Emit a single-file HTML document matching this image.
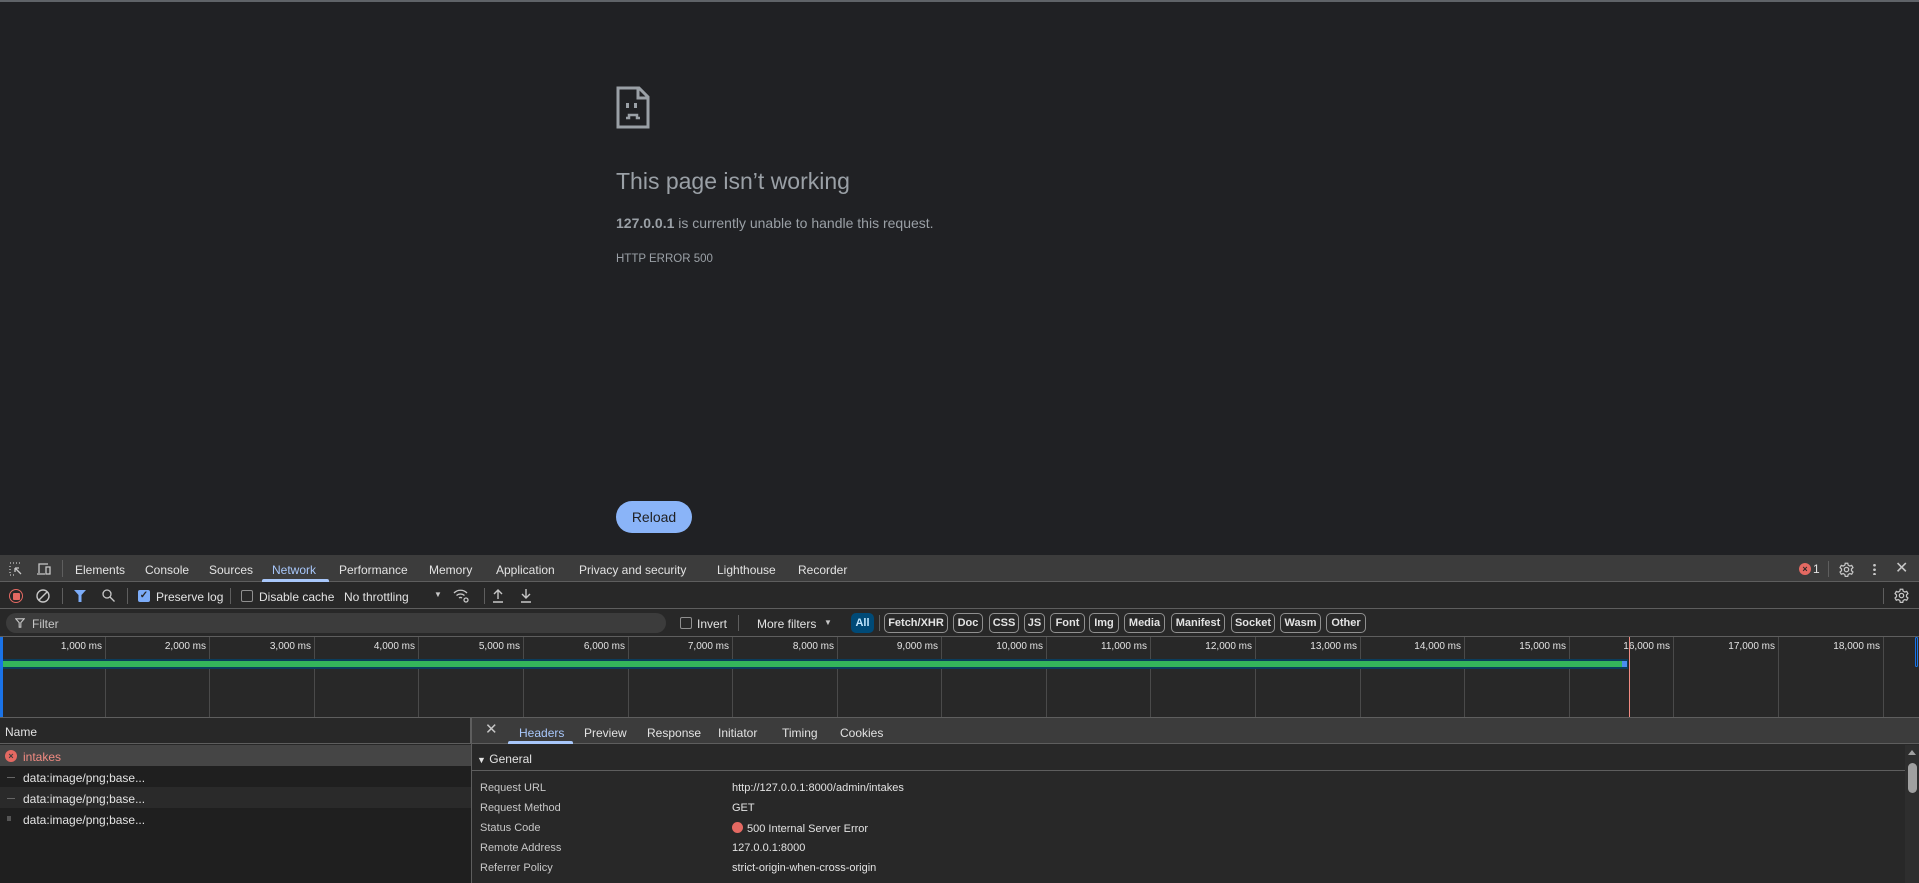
<!DOCTYPE html>
<html><head><meta charset="utf-8"><style>
*{margin:0;padding:0;box-sizing:border-box}
body{width:1919px;height:883px;overflow:hidden;background:#202124;font-family:"Liberation Sans",sans-serif;position:relative}
.a{position:absolute;white-space:nowrap}
.dt{font-size:12px;color:#e3e3e3}
.pill{position:absolute;top:613px;height:20px;border:1px solid #8f8f8f;border-radius:5px;color:#e3e3e3;font-size:11px;font-weight:bold;line-height:18px;text-align:center}
.gl{position:absolute;top:637px;width:1px;height:80px;background:#4a4a4a}
.tl{position:absolute;top:641px;font-size:10px;color:#e3e3e3;text-align:right;width:90px}
.lbl{position:absolute;left:480px;font-size:11px;color:#c7c7c7}
.val{position:absolute;left:732px;font-size:11px;color:#e3e3e3}
</style></head><body>
<div class="a" style="left:0;top:0;width:1919px;height:2px;background:#5f6368"></div>
<svg class="a" style="left:616px;top:86px" width="34" height="43" viewBox="0 0 34 43"><path d="M2 2H23L32 11V41H2Z" fill="none" stroke="#9aa0a6" stroke-width="3"/><path d="M22 2V12H32" fill="none" stroke="#9aa0a6" stroke-width="3"/><rect x="10" y="17" width="3" height="5" fill="#9aa0a6"/><rect x="18" y="17" width="3" height="5" fill="#9aa0a6"/><path d="M10 32H13V29H21V32H24" fill="none" stroke="#9aa0a6" stroke-width="2.5"/></svg>
<div class="a" style="left:616px;top:168px;font-size:23px;color:#9aa0a6">This page isn’t working</div>
<div class="a" style="left:616px;top:215px;font-size:14px;color:#9aa0a6"><b>127.0.0.1</b> is currently unable to handle this request.</div>
<div class="a" style="left:616px;top:253px;font-size:11.5px;color:#8ab4f8;color:#9aa0a6">HTTP ERROR 500</div>
<div class="a" style="left:616px;top:501px;width:76px;height:32px;border-radius:16px;background:#8ab4f8;color:#202124;font-size:14px;line-height:32px;text-align:center">Reload</div>

<!-- devtools -->
<div class="a" style="left:0;top:555px;width:1919px;height:328px;background:#282828"></div>
<div class="a" style="left:0;top:555px;width:1919px;height:27px;background:#3c3c3c;border-bottom:1px solid #5e5e5e"></div>
<svg class="a" style="left:9px;top:562px" width="14" height="14" viewBox="0 0 14 14" fill="none" stroke="#c7c7c7" stroke-width="1.3"><path d="M1 1h1M4 1h1M7 1h1M10 1h1M1 4v1M1 7v1M1 10v1M1 13h1M4 13h1" /><path d="M6 6L12 12M6 6v4M6 6h4"/></svg>
<svg class="a" style="left:36px;top:562px" width="16" height="14" viewBox="0 0 16 14" fill="none" stroke="#c7c7c7" stroke-width="1.3"><path d="M3 11V2h9M1 12h8"/><rect x="10" y="5" width="4" height="7"/></svg>
<div class="a" style="left:62px;top:560px;width:1px;height:17px;background:#5e5e5e"></div>
<div class="a dt" style="left:75px;top:563px">Elements</div>
<div class="a dt" style="left:145px;top:563px">Console</div>
<div class="a dt" style="left:209px;top:563px">Sources</div>
<div class="a dt" style="left:272px;top:563px;color:#a8c7fa">Network</div>
<div class="a" style="left:262px;top:579px;width:67px;height:3px;background:#a8c7fa;border-radius:2px 2px 0 0"></div>
<div class="a dt" style="left:339px;top:563px">Performance</div>
<div class="a dt" style="left:429px;top:563px">Memory</div>
<div class="a dt" style="left:496px;top:563px">Application</div>
<div class="a dt" style="left:579px;top:563px">Privacy and security</div>
<div class="a dt" style="left:717px;top:563px">Lighthouse</div>
<div class="a dt" style="left:798px;top:563px">Recorder</div>
<div class="a" style="left:1799px;top:563px;width:12px;height:12px;border-radius:6px;background:#e46962;color:#282828;font-size:9px;line-height:12px;text-align:center;font-weight:bold">×</div>
<div class="a dt" style="left:1813px;top:562px">1</div>
<div class="a" style="left:1828px;top:561px;width:1px;height:16px;background:#5e5e5e"></div>
<svg class="a" style="left:1839px;top:562px" width="15" height="15" viewBox="0 0 24 24" fill="none" stroke="#c7c7c7" stroke-width="2"><circle cx="12" cy="12" r="3.5"/><path d="M10 2h4l.7 3 2.6 1.5 3-1 2 3.5-2.3 2v3l2.3 2-2 3.5-3-1-2.6 1.5-.7 3h-4l-.7-3-2.6-1.5-3 1-2-3.5 2.3-2v-3l-2.3-2 2-3.5 3 1L9.3 5z"/></svg>
<div class="a" style="left:1873px;top:563px;width:3px;height:12px;background:radial-gradient(circle,#c7c7c7 1.2px,transparent 1.5px) 0 0/3px 4.5px"></div>
<div class="a" style="left:1895px;top:558px;font-size:16px;color:#c7c7c7">✕</div>

<div class="a" style="left:0;top:583px;width:1919px;height:26px;background:#282828;border-bottom:1px solid #5e5e5e"></div>
<div class="a" style="left:9px;top:589px;width:14px;height:14px;border:1.5px solid #e46962;border-radius:7px"></div>
<div class="a" style="left:12.5px;top:592.5px;width:7px;height:7px;background:#e46962;border-radius:1px"></div>
<svg class="a" style="left:36px;top:589px" width="14" height="14" viewBox="0 0 14 14" fill="none" stroke="#c7c7c7" stroke-width="1.4"><circle cx="7" cy="7" r="6"/><path d="M3 11L11 3"/></svg>
<div class="a" style="left:62px;top:588px;width:1px;height:16px;background:#5e5e5e"></div>
<svg class="a" style="left:74px;top:590px" width="12" height="12" viewBox="0 0 12 12"><path d="M0 0H12L7.5 5V12H4.5V5Z" fill="#7cacf8"/></svg>
<svg class="a" style="left:102px;top:589px" width="13" height="13" viewBox="0 0 13 13" fill="none" stroke="#c7c7c7" stroke-width="1.3"><circle cx="5" cy="5" r="4"/><path d="M8 8l4.5 4.5"/></svg>
<div class="a" style="left:127px;top:588px;width:1px;height:16px;background:#5e5e5e"></div>
<div class="a" style="left:138px;top:590px;width:12px;height:12px;background:#7cacf8;border-radius:2px;color:#282828;font-size:10px;line-height:12px;text-align:center;font-weight:bold">✓</div>
<div class="a dt" style="left:156px;top:590px">Preserve log</div>
<div class="a" style="left:230px;top:588px;width:1px;height:16px;background:#5e5e5e"></div>
<div class="a" style="left:241px;top:590px;width:12px;height:12px;border:1px solid #8f8f8f;border-radius:2px"></div>
<div class="a dt" style="left:259px;top:590px">Disable cache</div>
<div class="a dt" style="left:344px;top:590px">No throttling</div>
<div class="a" style="left:434px;top:590px;font-size:8px;color:#c7c7c7">▼</div>
<svg class="a" style="left:453px;top:588px" width="17" height="15" viewBox="0 0 17 15" fill="none" stroke="#c7c7c7" stroke-width="1.3"><path d="M1 5a9 9 0 0 1 13 0M3.5 7.5a6 6 0 0 1 8 0M6 10a2.5 2.5 0 0 1 3 0"/><circle cx="13" cy="12" r="2"/></svg>
<div class="a" style="left:484px;top:588px;width:1px;height:16px;background:#5e5e5e"></div>
<svg class="a" style="left:492px;top:588px" width="12" height="15" viewBox="0 0 12 15" fill="none" stroke="#c7c7c7" stroke-width="1.4"><path d="M6 11V2M2 6l4-4 4 4M1 14h10"/></svg>
<svg class="a" style="left:520px;top:588px" width="12" height="15" viewBox="0 0 12 15" fill="none" stroke="#c7c7c7" stroke-width="1.4"><path d="M6 1v9M2 6l4 4 4-4M1 14h10"/></svg>
<div class="a" style="left:1883px;top:588px;width:1px;height:16px;background:#5e5e5e"></div>
<svg class="a" style="left:1894px;top:588px" width="15" height="15" viewBox="0 0 24 24" fill="none" stroke="#c7c7c7" stroke-width="2"><circle cx="12" cy="12" r="3.5"/><path d="M10 2h4l.7 3 2.6 1.5 3-1 2 3.5-2.3 2v3l2.3 2-2 3.5-3-1-2.6 1.5-.7 3h-4l-.7-3-2.6-1.5-3 1-2-3.5 2.3-2v-3l-2.3-2 2-3.5 3 1L9.3 5z"/></svg>

<div class="a" style="left:0;top:610px;width:1919px;height:27px;background:#282828;border-bottom:1px solid #5e5e5e"></div>
<div class="a" style="left:6px;top:613px;width:660px;height:20px;background:#3c3c3c;border-radius:10px"></div>
<svg class="a" style="left:15px;top:618px" width="10" height="10" viewBox="0 0 12 12" fill="none" stroke="#c7c7c7" stroke-width="1.3"><path d="M1 1H11L7 5.5V11H5V5.5Z"/></svg>
<div class="a dt" style="left:32px;top:617px;color:#c7c7c7">Filter</div>
<div class="a" style="left:680px;top:617px;width:12px;height:12px;border:1px solid #8f8f8f;border-radius:2px"></div>
<div class="a dt" style="left:697px;top:617px">Invert</div>
<div class="a" style="left:738px;top:615px;width:1px;height:16px;background:#5e5e5e"></div>
<div class="a dt" style="left:757px;top:617px">More filters</div>
<div class="a" style="left:824px;top:618px;font-size:8px;color:#c7c7c7">▼</div>
<div class="a" style="left:851px;top:613px;width:23px;height:20px;background:#004a77;border-radius:5px;color:#c2e7ff;font-size:11px;font-weight:bold;line-height:20px;text-align:center">All</div>
<div class="a" style="left:879px;top:615px;width:1px;height:16px;background:#5e5e5e"></div>
<div class="pill" style="left:884px;width:64px">Fetch/XHR</div>
<div class="pill" style="left:953px;width:30px">Doc</div>
<div class="pill" style="left:989px;width:30px">CSS</div>
<div class="pill" style="left:1024px;width:21px">JS</div>
<div class="pill" style="left:1050px;width:35px">Font</div>
<div class="pill" style="left:1089px;width:30px">Img</div>
<div class="pill" style="left:1124px;width:41px">Media</div>
<div class="pill" style="left:1171px;width:54px">Manifest</div>
<div class="pill" style="left:1231px;width:44px">Socket</div>
<div class="pill" style="left:1280px;width:41px">Wasm</div>
<div class="pill" style="left:1326px;width:40px">Other</div>

<!-- timeline -->
<div class="gl" style="left:105px"></div><div class="gl" style="left:209px"></div><div class="gl" style="left:314px"></div><div class="gl" style="left:418px"></div><div class="gl" style="left:523px"></div><div class="gl" style="left:628px"></div><div class="gl" style="left:732px"></div><div class="gl" style="left:837px"></div><div class="gl" style="left:941px"></div><div class="gl" style="left:1046px"></div><div class="gl" style="left:1150px"></div><div class="gl" style="left:1255px"></div><div class="gl" style="left:1360px"></div><div class="gl" style="left:1464px"></div><div class="gl" style="left:1569px"></div><div class="gl" style="left:1673px"></div><div class="gl" style="left:1778px"></div><div class="gl" style="left:1883px"></div>
<div class="tl" style="left:12px">1,000 ms</div><div class="tl" style="left:116px">2,000 ms</div><div class="tl" style="left:221px">3,000 ms</div><div class="tl" style="left:325px">4,000 ms</div><div class="tl" style="left:430px">5,000 ms</div><div class="tl" style="left:535px">6,000 ms</div><div class="tl" style="left:639px">7,000 ms</div><div class="tl" style="left:744px">8,000 ms</div><div class="tl" style="left:848px">9,000 ms</div><div class="tl" style="left:953px">10,000 ms</div><div class="tl" style="left:1057px">11,000 ms</div><div class="tl" style="left:1162px">12,000 ms</div><div class="tl" style="left:1267px">13,000 ms</div><div class="tl" style="left:1371px">14,000 ms</div><div class="tl" style="left:1476px">15,000 ms</div><div class="tl" style="left:1580px">16,000 ms</div><div class="tl" style="left:1685px">17,000 ms</div><div class="tl" style="left:1790px">18,000 ms</div>
<div class="a" style="left:0;top:659px;width:1628px;height:10px;background:#0b3d5c"></div>
<div class="a" style="left:0;top:661px;width:1625px;height:6px;background:#34b55b"></div>
<div class="a" style="left:1622px;top:661px;width:5px;height:6px;background:#4a8df0"></div>
<div class="a" style="left:1629px;top:637px;width:1px;height:80px;background:#f28b82"></div>
<div class="a" style="left:0;top:637px;width:3px;height:80px;background:#1a73e8"></div>
<div class="a" style="left:1915px;top:637px;width:3px;height:30px;border:1px solid #1a73e8;border-radius:2px"></div>
<div class="a" style="left:0;top:717px;width:1919px;height:1px;background:#5e5e5e"></div>

<!-- list -->
<div class="a" style="left:0;top:718px;width:471px;height:26px;background:#282828;border-bottom:1px solid #5e5e5e;border-right:1px solid #5e5e5e"></div>
<div class="a dt" style="left:5px;top:725px">Name</div>
<div class="a" style="left:0;top:745px;width:471px;height:21px;background:#454545"></div>
<div class="a" style="left:5px;top:750px;width:12px;height:12px;border-radius:6px;background:#e46962;color:#3c3c3c;font-size:9px;font-weight:bold;line-height:12px;text-align:center">×</div>
<div class="a dt" style="left:23px;top:750px;color:#f28b82">intakes</div>
<div class="a" style="left:0;top:766px;width:471px;height:21px;background:#1f1f1f"></div>
<div class="a" style="left:0;top:787px;width:471px;height:21px;background:#2a2a2a"></div>
<div class="a" style="left:0;top:808px;width:471px;height:75px;background:#1f1f1f"></div>
<div class="a" style="left:7px;top:777px;width:8px;height:1px;background:#666"></div>
<div class="a" style="left:7px;top:798px;width:8px;height:1px;background:#666"></div>
<div class="a" style="left:7px;top:816px;width:4px;height:5px;background:#555"></div>
<div class="a dt" style="left:23px;top:771px">data:image/png;base...</div>
<div class="a dt" style="left:23px;top:792px">data:image/png;base...</div>
<div class="a dt" style="left:23px;top:813px">data:image/png;base...</div>
<div class="a" style="left:471px;top:718px;width:1px;height:165px;background:#5e5e5e"></div>

<!-- details -->
<div class="a" style="left:472px;top:718px;width:1447px;height:26px;background:#3c3c3c;border-bottom:1px solid #5e5e5e"></div>
<div class="a" style="left:485px;top:720px;font-size:15px;color:#c7c7c7">✕</div>
<div class="a dt" style="left:519px;top:726px;color:#a8c7fa">Headers</div>
<div class="a" style="left:508px;top:741px;width:65px;height:3px;background:#a8c7fa;border-radius:2px 2px 0 0"></div>
<div class="a dt" style="left:584px;top:726px">Preview</div>
<div class="a dt" style="left:647px;top:726px">Response</div>
<div class="a dt" style="left:718px;top:726px">Initiator</div>
<div class="a dt" style="left:782px;top:726px">Timing</div>
<div class="a dt" style="left:840px;top:726px">Cookies</div>
<div class="a" style="left:472px;top:745px;width:1433px;height:26px;border-bottom:1px solid #5e5e5e"></div>
<div class="a dt" style="left:477px;top:752px"><span style="font-size:9px">▼</span> General</div>
<div class="lbl" style="left:480px;top:782px">Request URL</div><div class="val" style="top:782px">http://127.0.0.1:8000/admin/intakes</div>
<div class="lbl" style="left:480px;top:802px">Request Method</div><div class="val" style="top:802px">GET</div>
<div class="lbl" style="left:480px;top:822px">Status Code</div><div class="val" style="top:822px"><span style="display:inline-block;width:11px;height:11px;border-radius:6px;background:#e46962;vertical-align:-1px;margin-right:4px"></span>500 Internal Server Error</div>
<div class="lbl" style="left:480px;top:842px">Remote Address</div><div class="val" style="top:842px">127.0.0.1:8000</div>
<div class="lbl" style="left:480px;top:862px">Referrer Policy</div><div class="val" style="top:862px">strict-origin-when-cross-origin</div>
<div class="a" style="left:1905px;top:745px;width:14px;height:138px;background:#2e2e2e"></div>
<div class="a" style="left:1908px;top:750px;width:0;height:0;border-left:4px solid transparent;border-right:4px solid transparent;border-bottom:5px solid #a0a0a0"></div>
<div class="a" style="left:1908px;top:763px;width:9px;height:30px;border-radius:5px;background:#a0a0a0"></div>
</body></html>
